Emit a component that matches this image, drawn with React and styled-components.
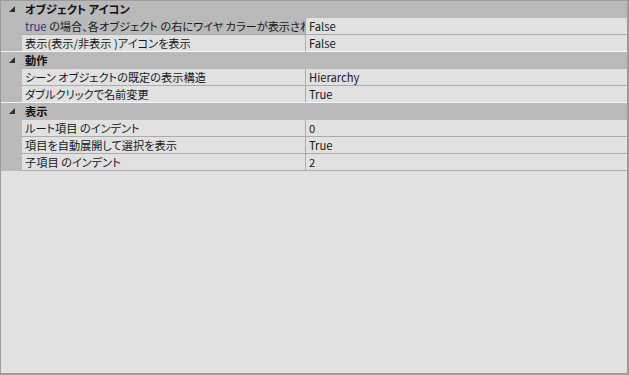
import React from "react";
import styled, { createGlobalStyle } from "styled-components";

const CATEGORIES = [
	{
		id: "icons",
		title: "オブジェクト アイコン",
		rows: [
			{ id: "wire", label: "true の場合、各オブジェクト の右にワイヤ カラーが表示され", value: "False", selected: true, accent: "true" },
			{ id: "visibility", label: "表示(表示/非表示 )アイコンを表示", value: "False" },
		],
	},
	{
		id: "behavior",
		title: "動作",
		rows: [
			{ id: "structure", label: "シーン オブジェクトの既定の表示構造", value: "Hierarchy" },
			{ id: "rename", label: "ダブルクリックで名前変更", value: "True" },
		],
	},
	{
		id: "display",
		title: "表示",
		rows: [
			{ id: "rootIndent", label: "ルート項目 のインデント", value: "0" },
			{ id: "autoExpand", label: "項目を自動展開して選択を表示", value: "True" },
			{ id: "childIndent", label: "子項目 のインデント", value: "2" },
		],
	},
];

const GlobalStyle = createGlobalStyle`
	html, body {
		margin: 0;
		padding: 0;
	}

	body {
		font-family: "Noto Sans CJK JP", "Noto Sans", sans-serif;
		font-size: 11.2px;
		font-feature-settings: "palt";
		color: #141820;
	}
`;

const ExpandGlyph = () => (
	<svg width="6" height="6" viewBox="0 0 6 6">
		<polygon points="6,0 6,6 0,6" fill="#2e2e2e" />
	</svg>
);

const PropertyRow = ({ label, value, selected, accent, last }) => {
	const rest = accent ? label.slice(accent.length) : label;
	return (
		<Row>
			<Gutter $last={last} />
			<LabelCell $selected={selected} $last={last}>
				{accent && <Accent>{accent}</Accent>}
				{rest}
			</LabelCell>
			<ValueCell $last={last}>{value}</ValueCell>
		</Row>
	);
};

const App = () => {
	return (
		<>
			<GlobalStyle />
			<Wrapper>
				{CATEGORIES.map((category, index) => (
					<section key={category.id}>
						<CategoryHeader>
							<GlyphSlot>
								<ExpandGlyph />
							</GlyphSlot>
							<CategoryTitle>{category.title}</CategoryTitle>
						</CategoryHeader>
						{category.rows.map((row, rowIndex) => (
							<PropertyRow
								key={row.id}
								{...row}
								last={rowIndex === category.rows.length - 1 && index < CATEGORIES.length - 1}
							/>
						))}
					</section>
				))}
			</Wrapper>
		</>
	);
};

const Wrapper = styled.div`
	box-sizing: border-box;
	width: 629px;
	height: 375px;
	border: 1px solid #9c9c9c;
	border-right-width: 2px;
	border-bottom-width: 2px;
	background: #e1e1e1;
	overflow: hidden;
`;

const CategoryHeader = styled.div`
	display: flex;
	align-items: center;
	height: 17px;
	background: #b9b9b9;
`;

const GlyphSlot = styled.div`
	display: flex;
	align-items: center;
	justify-content: flex-end;
	width: 21px;
	padding-right: 7px;
	box-sizing: border-box;
	margin-top: -1px;
`;

const CategoryTitle = styled.div`
	padding-left: 3px;
	font-weight: bold;
	line-height: 17px;
	color: #101010;
`;

const Row = styled.div`
	display: grid;
	grid-template-columns: 21px 283px 1fr;
	height: 17px;
`;

const Gutter = styled.div`
	background: #b9b9b9;
	border-bottom: 1px solid ${(p) => (p.$last ? "#f6f6f6" : "#b9b9b9")};
`;

const LabelCell = styled.div`
	min-width: 0;
	padding-left: 3px;
	line-height: 16px;
	white-space: nowrap;
	overflow: hidden;
	background: ${(p) => (p.$selected ? "#b9b9b9" : "#e1e1e1")};
	border-bottom: 1px solid ${(p) => (p.$last ? "#f6f6f6" : "#ababab")};
`;

const Accent = styled.span`
	color: #1d3a7c;
`;

const ValueCell = styled.div`
	min-width: 0;
	padding-left: 3px;
	line-height: 16px;
	white-space: nowrap;
	overflow: hidden;
	border-left: 1px solid #ababab;
	border-bottom: 1px solid ${(p) => (p.$last ? "#f6f6f6" : "#ababab")};
`;

export default App;
